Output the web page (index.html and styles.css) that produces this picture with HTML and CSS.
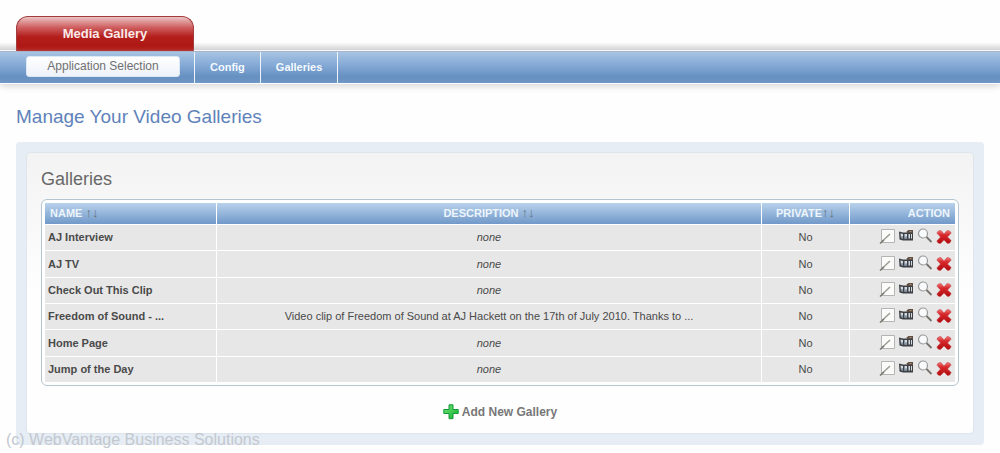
FILE: index.html
```html
<!DOCTYPE html>
<html lang="en">
<head>
  <meta charset="UTF-8">
  <meta name="viewport" content="width=device-width, initial-scale=1.0">
  <title>Media Gallery</title>
  <link rel="stylesheet" href="styles.css">
</head>
<body>

<!-- shared icons -->
<svg class="sprite" width="0" height="0" aria-hidden="true">
  <defs>
    <linearGradient id="redFill" x1="0" y1="0" x2="0" y2="1">
      <stop offset="0" stop-color="#ee7a7a"/>
      <stop offset="0.35" stop-color="#d8282b"/>
      <stop offset="1" stop-color="#b00c10"/>
    </linearGradient>
    <linearGradient id="greenFill" x1="0" y1="0" x2="1" y2="1">
      <stop offset="0" stop-color="#74e57c"/>
      <stop offset="1" stop-color="#0fb02c"/>
    </linearGradient>
  </defs>
  <symbol id="icon-edit" viewBox="0 0 16 16">
    <path d="M2.500 1.500h13v13h-13z" fill="#fbfbf9" stroke="#b4b4b4"/>
    <path d="M3 13.500 11 6" stroke="#9c9c96" stroke-width="1.500"/>
    <path d="M1 15.500 5 12" stroke="#77776f" stroke-width="1.500"/>
  </symbol>
  <symbol id="icon-media" viewBox="0 0 16 16">
    <path d="M1 3.500 5 4.500h10v8H5l-3.500-1z" fill="#3d4146"/>
    <path d="M2.500 5.500 5 6v4.500l-2-.500zM6.500 6H9v4.500H6.500zM10.500 6H12v4.500h-1.500zM13 6h1v4.500h-1z" fill="#d3dae0"/>
    <path d="M3 8.500 5 8v2.500L3 10zM6.500 8.500H9v2H6.500z" fill="#8495a6"/>
    <path d="M8.500 3.500 10.500 2h4.500v3H9z" fill="#5f4d42"/>
    <path d="M11.500 3h2v1h-2z" fill="#a58f7d"/>
  </symbol>
  <symbol id="icon-view" viewBox="0 0 16 16">
    <circle cx="6" cy="5.500" r="4.500" fill="#f8fafb" stroke="#999" stroke-width="1.200"/>
    <path d="M9.500 9 14.500 14" stroke="#77736c" stroke-width="1.800"/>
  </symbol>
  <symbol id="icon-delete" viewBox="0 0 16 16">
    <path d="M.800 5Q2 2 5 2.500L8 6 11 2.500Q14 2 15.200 5L11.500 9 15.200 12.500Q14 16 11.500 15.500L8 12 4.500 15.500Q2 16 .800 13L4.500 9Z" fill="url(#redFill)" stroke="#c54045" stroke-width=".500"/>
  </symbol>
  <symbol id="icon-add" viewBox="0 0 16 16">
    <path d="M6 .800h4V5.500h5.200v4H10v5.200H6V9.500H.800v-4H6z" fill="url(#greenFill)" stroke="#159a36"/>
  </symbol>
</svg>

<header>
  <h1 class="tab">Media Gallery</h1>
  <nav>
    <div class="app-box"><button type="button">Application Selection</button></div>
    <a href="#config">Config</a>
    <a href="#galleries">Galleries</a>
  </nav>
</header>

<main>
  <h2>Manage Your Video Galleries</h2>

  <section class="panel" id="galleries">
    <div class="panel-inner">
      <h3>Galleries</h3>

      <div class="table-wrap">
        <table>
          <thead>
            <tr>
              <th class="name">NAME <span class="sort"><a href="#asc">↑</a><a href="#desc">↓</a></span></th>
              <th>DESCRIPTION <span class="sort"><a href="#asc">↑</a><a href="#desc">↓</a></span></th>
              <th class="private">PRIVATE<span class="sort"><a href="#asc">↑</a><a href="#desc">↓</a></span></th>
              <th class="action">ACTION</th>
            </tr>
          </thead>
          <tbody>
            <tr>
              <td class="name">AJ Interview</td>
              <td><em>none</em></td>
              <td>No</td>
              <td><div class="actions">
                <a href="#edit" aria-label="Edit"><svg><use href="#icon-edit"/></svg></a>
                <a href="#media" aria-label="Media"><svg><use href="#icon-media"/></svg></a>
                <a href="#view" aria-label="View"><svg><use href="#icon-view"/></svg></a>
                <a href="#delete" aria-label="Delete"><svg><use href="#icon-delete"/></svg></a>
              </div></td>
            </tr>
            <tr>
              <td class="name">AJ TV</td>
              <td><em>none</em></td>
              <td>No</td>
              <td><div class="actions">
                <a href="#edit" aria-label="Edit"><svg><use href="#icon-edit"/></svg></a>
                <a href="#media" aria-label="Media"><svg><use href="#icon-media"/></svg></a>
                <a href="#view" aria-label="View"><svg><use href="#icon-view"/></svg></a>
                <a href="#delete" aria-label="Delete"><svg><use href="#icon-delete"/></svg></a>
              </div></td>
            </tr>
            <tr>
              <td class="name">Check Out This Clip</td>
              <td><em>none</em></td>
              <td>No</td>
              <td><div class="actions">
                <a href="#edit" aria-label="Edit"><svg><use href="#icon-edit"/></svg></a>
                <a href="#media" aria-label="Media"><svg><use href="#icon-media"/></svg></a>
                <a href="#view" aria-label="View"><svg><use href="#icon-view"/></svg></a>
                <a href="#delete" aria-label="Delete"><svg><use href="#icon-delete"/></svg></a>
              </div></td>
            </tr>
            <tr>
              <td class="name">Freedom of Sound - ...</td>
              <td>Video clip of Freedom of Sound at AJ Hackett on the 17th of July 2010. Thanks to ...</td>
              <td>No</td>
              <td><div class="actions">
                <a href="#edit" aria-label="Edit"><svg><use href="#icon-edit"/></svg></a>
                <a href="#media" aria-label="Media"><svg><use href="#icon-media"/></svg></a>
                <a href="#view" aria-label="View"><svg><use href="#icon-view"/></svg></a>
                <a href="#delete" aria-label="Delete"><svg><use href="#icon-delete"/></svg></a>
              </div></td>
            </tr>
            <tr>
              <td class="name">Home Page</td>
              <td><em>none</em></td>
              <td>No</td>
              <td><div class="actions">
                <a href="#edit" aria-label="Edit"><svg><use href="#icon-edit"/></svg></a>
                <a href="#media" aria-label="Media"><svg><use href="#icon-media"/></svg></a>
                <a href="#view" aria-label="View"><svg><use href="#icon-view"/></svg></a>
                <a href="#delete" aria-label="Delete"><svg><use href="#icon-delete"/></svg></a>
              </div></td>
            </tr>
            <tr>
              <td class="name">Jump of the Day</td>
              <td><em>none</em></td>
              <td>No</td>
              <td><div class="actions">
                <a href="#edit" aria-label="Edit"><svg><use href="#icon-edit"/></svg></a>
                <a href="#media" aria-label="Media"><svg><use href="#icon-media"/></svg></a>
                <a href="#view" aria-label="View"><svg><use href="#icon-view"/></svg></a>
                <a href="#delete" aria-label="Delete"><svg><use href="#icon-delete"/></svg></a>
              </div></td>
            </tr>
          </tbody>
        </table>
      </div>

      <a class="add" href="#add"><svg><use href="#icon-add"/></svg>Add New Gallery</a>
    </div>
  </section>
</main>

<div class="copyright">(c) WebVantage Business Solutions</div>

</body>
</html>
```
FILE: styles.css
```css
* { box-sizing: border-box; }

body {
  font-family: "Liberation Sans", Arial, sans-serif;
  font-size: 11px;
  color: #4a4a4a;
  background: #fefefe;
  margin: 0;
  position: relative;
}

a {
  color: inherit;
  text-decoration: none;
}

h1, h2, h3 {
  margin: 0;
  font-weight: normal;
}

.sprite { display: block; }

header {
  padding-top: 16px;
  background: linear-gradient(to top, #d3d3d6 0, #fefefe 8px) 0 0 / 100% 50px no-repeat;
}

.tab {
  width: 178px;
  margin-left: 16px;
  border: 1px solid #a33a3c;
  border-bottom: 0;
  border-radius: 12px 12px 0 0;
  background: linear-gradient(#ecc4c4 0, #cf6061 30%, #b31f1c 58%, #ad1410 100%);
  color: #fbeaea;
  font-size: 13px;
  font-weight: bold;
  line-height: 34px;
  text-align: center;
}

nav {
  display: flex;
  height: 32px;
  border-top: 1px solid #a9b5cb;
  background: linear-gradient(#a7c4e3 0, #86abd6 40%, #6690c1 80%, #6f97c6 100%);
  box-shadow: 0 1px #fff, 0 3px 7px #d4d4d4;
}

nav .app-box {
  width: 195px;
  padding: 4px 14px 0 26px;
  border-right: 1px solid #eef5fc;
}

nav button {
  display: block;
  width: 100%;
  height: 21px;
  padding: 0 0 1px;
  border: 1px solid #dce8f5;
  border-radius: 3px;
  background: linear-gradient(#fff, #edf2f9);
  color: #707070;
  font-family: inherit;
  font-size: 12px;
}

nav a {
  padding: 0 15px;
  border-right: 1px solid #eef5fc;
  color: #f4f9ff;
  font-weight: bold;
  line-height: 31px;
}

main { padding: 22px 16px 8px; }

h2 {
  color: #5f82ba;
  font-size: 19px;
  line-height: 24px;
}

.panel {
  margin-top: 13px;
  padding: 10px 10px 11px;
  border-radius: 4px;
  background: #e6edf5;
}

.panel-inner {
  padding: 14px 14px 13px;
  border: 1px solid #dde6ee;
  border-radius: 4px;
  background: linear-gradient(#f3f3f3 0, #fefefe 50%);
}

h3 {
  color: #686868;
  font-size: 18px;
  line-height: 24px;
}

.table-wrap {
  margin-top: 8px;
  padding: 2px;
  border: 1px solid #b5c5cf;
  border-radius: 6px;
  background: #fff;
}

table {
  width: 100%;
  table-layout: fixed;
  border-spacing: 1px;
}

th, td {
  padding: 0 3px 1px;
  text-align: center;
}

th {
  height: 21px;
  background: linear-gradient(#b9d2eb, #94b5da 50%, #7199c9);
  color: #edf5fc;
}

td {
  height: 25px;
  background: #e7e7e7;
}

tbody tr:nth-child(3n+2) td { height: 26px; }

.name {
  width: 171px;
  text-align: left;
  font-weight: bold;
}

th.name { padding-left: 5px; }

.private { width: 87px; }

.action {
  width: 105px;
  padding-right: 5px;
  text-align: right;
}

.sort {
  color: #66717f;
  font-size: 13px;
  font-weight: normal;
  line-height: 12px;
}

.actions {
  display: flex;
  justify-content: flex-end;
  gap: 3px;
  padding-bottom: 2px;
}

.actions svg {
  display: block;
  width: 16px;
  height: 16px;
}

.add {
  display: flex;
  justify-content: center;
  align-items: center;
  gap: 3px;
  margin-top: 18px;
  color: #777;
  font-size: 12px;
  font-weight: bold;
}

.add svg {
  width: 16px;
  height: 16px;
}

.copyright {
  position: absolute;
  left: 6px;
  bottom: 3px;
  color: #c3c8cf;
  font-size: 16px;
  line-height: 20px;
}
```
